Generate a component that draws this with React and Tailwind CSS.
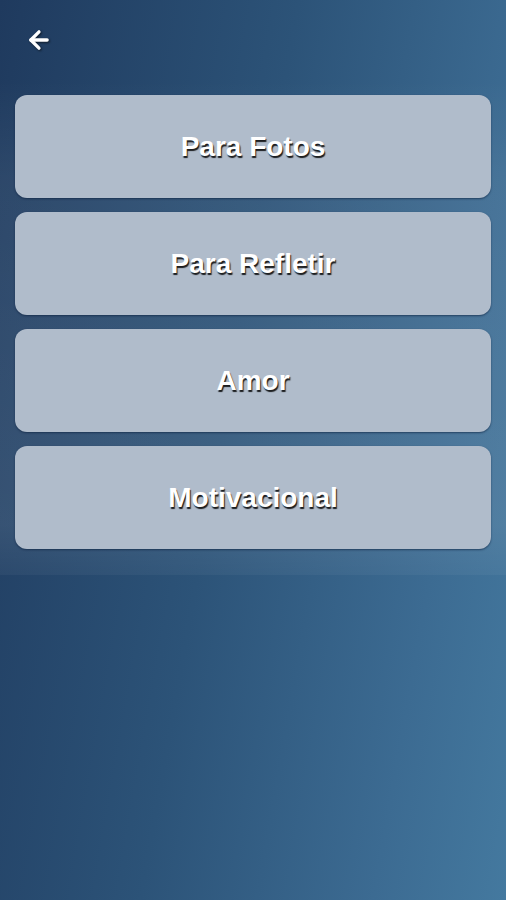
import { ArrowLeft } from "lucide-react";

const categories = ["Para Fotos", "Para Refletir", "Amor", "Motivacional"];

export default function App() {
  return (
    <div className="min-h-[900px] w-full bg-[linear-gradient(100deg,#1f3a5e_0%,#2c5378_45%,#3c6b92_80%,#44799f_100%)] font-['Liberation_Sans',Arial,sans-serif]">
      {/* top bar */}
      <div className="h-[80px] px-[25px] pt-[26px]">
        <ArrowLeft className="h-[28px] w-[28px] text-white drop-shadow-[1px_1px_1px_rgba(0,0,0,0.6)]" strokeWidth={2.8} />
      </div>

      {/* list */}
      <div className="bg-[linear-gradient(180deg,rgba(255,255,255,0)_0%,rgba(255,255,255,0.06)_20%,rgba(255,255,255,0.09)_90%,rgba(255,255,255,0.04)_100%)] px-[15px] pt-[15px] pb-[26px]">
        <div className="flex flex-col gap-[14px]">
          {categories.map((c) => (
            <button
              key={c}
              className="flex h-[103px] w-full items-center justify-center rounded-[12px] bg-[#b0bccb] shadow-[0_1px_2px_rgba(10,30,60,0.6)]"
            >
              <span className="text-[28px] font-bold text-white [text-shadow:1px_2px_1px_rgba(0,0,0,0.85)]">
                {c}
              </span>
            </button>
          ))}
        </div>
      </div>
    </div>
  );
}
